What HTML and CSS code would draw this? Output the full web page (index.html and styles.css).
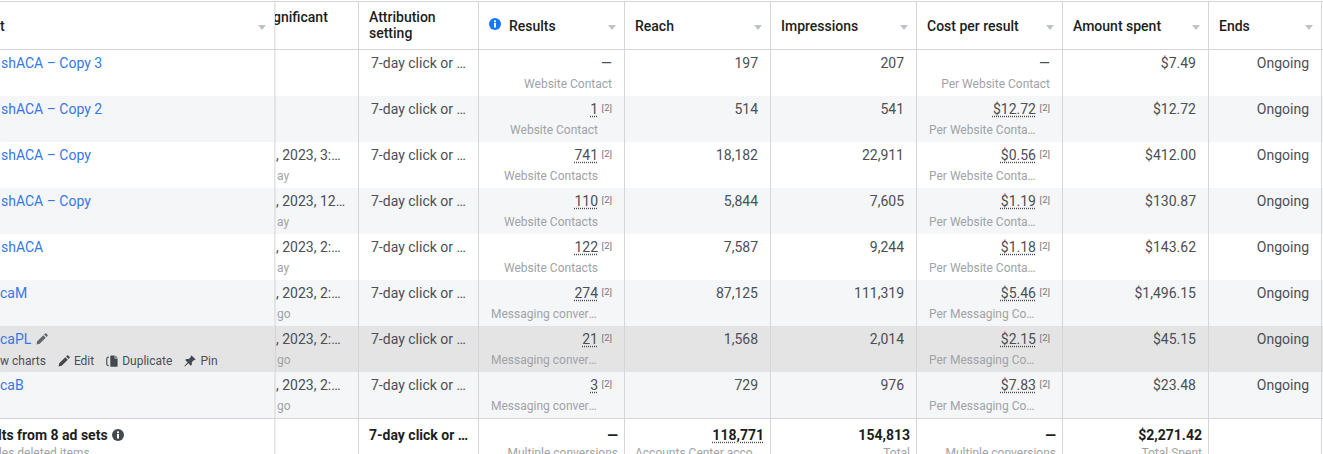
FILE: index.html
```html
<!DOCTYPE html>
<html>
<head>
    <title>Ad sets</title>
    <link rel="stylesheet" href="styles.css">
</head>
<body>
    <div class="table">
        <div class="row head">
            <div class="cell name"><span class="cut-t">t</span><i class="sort"></i></div>
            <div class="cell"><span class="cut-sig">gnificant</span></div>
            <div class="cell pad">Attribution<br>setting</div>
            <div class="cell pad mid">
                <svg class="info" viewBox="0 0 12 12"><circle cx="6" cy="6" r="6" fill="#1877f2"/><rect x="5" y="5" width="2" height="4.5" fill="#fff"/><rect x="5" y="2.4" width="2" height="1.8" fill="#fff"/></svg>
                Results<i class="sort"></i>
            </div>
            <div class="cell pad mid">Reach<i class="sort"></i></div>
            <div class="cell pad mid">Impressions<i class="sort"></i></div>
            <div class="cell pad mid">Cost per result<i class="sort"></i></div>
            <div class="cell pad mid">Amount spent<i class="sort"></i></div>
            <div class="cell pad mid">Ends<i class="sort"></i></div>
        </div>

        <div class="row">
            <div class="cell name"><a class="link">shACA – Copy 3</a></div>
            <div class="cell"></div>
            <div class="cell attr"><div class="cut">7-day click or 1-day view</div></div>
            <div class="cell val"><div>—</div><div class="sub">Website Contact</div></div>
            <div class="cell val">197</div>
            <div class="cell val">207</div>
            <div class="cell val"><div>—</div><div class="sub">Per Website Contact</div></div>
            <div class="cell val">$7.49</div>
            <div class="cell val">Ongoing</div>
        </div>

        <div class="row alt">
            <div class="cell name"><a class="link">shACA – Copy 2</a></div>
            <div class="cell"></div>
            <div class="cell attr"><div class="cut">7-day click or 1-day view</div></div>
            <div class="cell val"><div><span class="num">1</span><span class="ref">[2]</span></div><div class="sub noted">Website Contact</div></div>
            <div class="cell val">514</div>
            <div class="cell val">541</div>
            <div class="cell val"><div><span class="num">$12.72</span><span class="ref">[2]</span></div><div class="sub noted">Per Website Contact</div></div>
            <div class="cell val">$12.72</div>
            <div class="cell val">Ongoing</div>
        </div>

        <div class="row">
            <div class="cell name"><a class="link">shACA – Copy</a></div>
            <div class="cell date"><div>, 2023, 3:…</div><div class="sub ago">ay</div></div>
            <div class="cell attr"><div class="cut">7-day click or 1-day view</div></div>
            <div class="cell val"><div><span class="num">741</span><span class="ref">[2]</span></div><div class="sub noted">Website Contacts</div></div>
            <div class="cell val">18,182</div>
            <div class="cell val">22,911</div>
            <div class="cell val"><div><span class="num">$0.56</span><span class="ref">[2]</span></div><div class="sub noted">Per Website Contact</div></div>
            <div class="cell val">$412.00</div>
            <div class="cell val">Ongoing</div>
        </div>

        <div class="row alt">
            <div class="cell name"><a class="link">shACA – Copy</a></div>
            <div class="cell date"><div>, 2023, 12…</div><div class="sub ago">ay</div></div>
            <div class="cell attr"><div class="cut">7-day click or 1-day view</div></div>
            <div class="cell val"><div><span class="num">110</span><span class="ref">[2]</span></div><div class="sub noted">Website Contacts</div></div>
            <div class="cell val">5,844</div>
            <div class="cell val">7,605</div>
            <div class="cell val"><div><span class="num">$1.19</span><span class="ref">[2]</span></div><div class="sub noted">Per Website Contact</div></div>
            <div class="cell val">$130.87</div>
            <div class="cell val">Ongoing</div>
        </div>

        <div class="row">
            <div class="cell name"><a class="link">shACA</a></div>
            <div class="cell date"><div>, 2023, 2:…</div><div class="sub ago">ay</div></div>
            <div class="cell attr"><div class="cut">7-day click or 1-day view</div></div>
            <div class="cell val"><div><span class="num">122</span><span class="ref">[2]</span></div><div class="sub noted">Website Contacts</div></div>
            <div class="cell val">7,587</div>
            <div class="cell val">9,244</div>
            <div class="cell val"><div><span class="num">$1.18</span><span class="ref">[2]</span></div><div class="sub noted">Per Website Contact</div></div>
            <div class="cell val">$143.62</div>
            <div class="cell val">Ongoing</div>
        </div>

        <div class="row alt">
            <div class="cell name"><a class="link flush">caM</a></div>
            <div class="cell date"><div>, 2023, 2:…</div><div class="sub ago">go</div></div>
            <div class="cell attr"><div class="cut">7-day click or 1-day view</div></div>
            <div class="cell val"><div><span class="num">274</span><span class="ref">[2]</span></div><div class="sub noted">Messaging conversations</div></div>
            <div class="cell val">87,125</div>
            <div class="cell val">111,319</div>
            <div class="cell val"><div><span class="num">$5.46</span><span class="ref">[2]</span></div><div class="sub noted">Per Messaging Conversation</div></div>
            <div class="cell val">$1,496.15</div>
            <div class="cell val">Ongoing</div>
        </div>

        <div class="row hover">
            <div class="cell name">
                <div class="title">
                    <a class="link flush">caPL</a>
                    <svg class="ico" viewBox="0 0 12 12"><path d="M0.5 11.5l0.7-3.2 6.1-6.1 2.5 2.5-6.1 6.1zM8.1 1.4l0.9-0.9a0.9 0.9 0 0 1 1.2 0l1.3 1.3a0.9 0.9 0 0 1 0 1.2l-0.9 0.9z" fill="#606770"/></svg>
                </div>
                <div class="actions">
                    <span class="charts">w charts</span>
                    <span class="act"><svg class="ico" viewBox="0 0 12 12"><path d="M0.5 11.5l0.7-3.2 6.1-6.1 2.5 2.5-6.1 6.1zM8.1 1.4l0.9-0.9a0.9 0.9 0 0 1 1.2 0l1.3 1.3a0.9 0.9 0 0 1 0 1.2l-0.9 0.9z" fill="#444950"/></svg>Edit</span>
                    <span class="act"><svg class="ico" viewBox="0 0 12 12"><path d="M5 0.5h3.6v3h3v7.6a0.7 0.7 0 0 1-0.7 0.7H5a0.7 0.7 0 0 1-0.7-0.7V1.2A0.7 0.7 0 0 1 5 0.5zM9.4 0.6l2.1 2.2H9.4zM2.9 1.6v0.9C1.9 2.7 1.3 3.2 1.3 4v4.8c0 0.9 0.6 1.4 1.6 1.6v0.9C1.1 11.1 0.2 10.2 0.2 8.8V4c0-1.4 0.9-2.2 2.7-2.4z" fill="#444950"/></svg>Duplicate</span>
                    <span class="act"><svg class="ico" viewBox="0 0 12 12"><path d="M7.6 0.4l4 4-0.9 0.9-0.7-0.3-2.2 2.2 0.1 2.4-1.1 1.1-2.4-2.4-3.5 3.3-0.6-0.6 3.3-3.5-2.4-2.4 1.1-1.1 2.4 0.1 2.2-2.2-0.3-0.7z" fill="#444950"/></svg>Pin</span>
                </div>
            </div>
            <div class="cell date"><div>, 2023, 2:…</div><div class="sub ago">go</div></div>
            <div class="cell attr"><div class="cut">7-day click or 1-day view</div></div>
            <div class="cell val"><div><span class="num">21</span><span class="ref">[2]</span></div><div class="sub noted">Messaging conversations</div></div>
            <div class="cell val">1,568</div>
            <div class="cell val">2,014</div>
            <div class="cell val"><div><span class="num">$2.15</span><span class="ref">[2]</span></div><div class="sub noted">Per Messaging Conversation</div></div>
            <div class="cell val">$45.15</div>
            <div class="cell val">Ongoing</div>
        </div>

        <div class="row alt last">
            <div class="cell name"><a class="link flush">caB</a></div>
            <div class="cell date"><div>, 2023, 2:…</div><div class="sub ago">go</div></div>
            <div class="cell attr"><div class="cut">7-day click or 1-day view</div></div>
            <div class="cell val"><div><span class="num">3</span><span class="ref">[2]</span></div><div class="sub noted">Messaging conversations</div></div>
            <div class="cell val">729</div>
            <div class="cell val">976</div>
            <div class="cell val"><div><span class="num">$7.83</span><span class="ref">[2]</span></div><div class="sub noted">Per Messaging Conversation</div></div>
            <div class="cell val">$23.48</div>
            <div class="cell val">Ongoing</div>
        </div>

        <div class="row total">
            <div class="cell name">
                <div class="title pulled"><span>lts from 8 ad sets</span>
                    <svg class="ico" viewBox="0 0 12 12"><circle cx="6" cy="6" r="6" fill="#444950"/><rect x="5" y="5" width="2" height="4.5" fill="#fff"/><rect x="5" y="2.4" width="2" height="1.8" fill="#fff"/></svg>
                </div>
                <div class="sub includes">des deleted items</div>
            </div>
            <div class="cell"></div>
            <div class="cell attr"><div class="cut">7-day click or 1-day view</div></div>
            <div class="cell val"><div>—</div><div class="sub">Multiple conversions</div></div>
            <div class="cell val"><div><span class="num">118,771</span></div><div class="sub">Accounts Center accounts</div></div>
            <div class="cell val"><div>154,813</div><div class="sub">Total</div></div>
            <div class="cell val"><div>—</div><div class="sub">Multiple conversions</div></div>
            <div class="cell val"><div>$2,271.42</div><div class="sub">Total Spent</div></div>
            <div class="cell val"></div>
        </div>
    </div>
</body>
</html>
```

FILE: styles.css
```css
* { box-sizing: border-box; }
html, body { margin: 0; height: 454px; overflow: hidden; background: #fff; }
body { font-family: Roboto, "Liberation Sans", sans-serif; font-size: 14px; line-height: 18px; color: #4b4f56; }

.table { padding-top: 1px; height: 454px; overflow: hidden; }
.row {
    display: grid;
    grid-template-columns: 274px 85px 120px repeat(5, 146px) 113px;
    height: 46px;
}
.alt { background-color: #f5f6f7; }
.hover { background-color: #e4e4e4; }
.last { height: 47px; border-bottom: 1px solid #d5d6d9; }

.cell { border-right: 1px solid #d5d6d9; padding-top: 4px; white-space: nowrap; min-width: 0; overflow: hidden; }

.name {
    position: relative;
    z-index: 2;
    overflow: visible;
    border-right: none;
    background-color: #fff;
    box-shadow: 1px 0 0 #e2e3e5, 2px 0 1px rgba(0, 0, 0, 0.06);
}
.alt .name { background-color: #f5f6f7; }
.hover .name { background-color: #e4e4e4; }
.link { color: #3578e5; margin-left: 1px; }
.flush { margin-left: 0; }

.sub { font-size: 12px; color: #a0a3a8; margin-top: 3px; overflow: hidden; text-overflow: ellipsis; }
.val { padding-left: 12px; padding-right: 12px; text-align: right; }
.noted { padding-right: 14px; }
.attr { padding-left: 12px; padding-right: 12px; }
.cut { overflow: hidden; text-overflow: ellipsis; }
.date { padding-left: 2px; }
.ago { margin-left: 1px; }
.num { text-decoration: underline dotted #444950; text-underline-offset: 2px; }
.ref { display: inline-block; font-size: 9.5px; line-height: 10px; margin-left: 3px; width: 11px; vertical-align: 3px; color: #777; }

.head {
    height: 49px;
    border-top: 1px solid #d5d6d9;
    border-bottom: 1px solid #d5d6d9;
    color: #1c1e21;
    font-weight: 500;
    line-height: 16px;
}
.head .cell { position: relative; padding-top: 7px; }
.head .pad { padding-left: 10px; }
.head .mid { display: flex; align-items: center; padding-top: 0; }
.cut-t { display: block; padding-top: 9px; }
.head .cell > .cut-sig { margin-left: -1px; }
.info { width: 12px; height: 12px; margin: -4px 8px 0 0; }
.sort {
    position: absolute;
    right: 8px;
    top: 23px;
    border-left: 4.5px solid transparent;
    border-right: 4.5px solid transparent;
    border-top: 5px solid #bec2c9;
}

.title { display: flex; align-items: center; gap: 5px; }
.pulled { margin-left: -2px; gap: 4px; }
.ico { width: 12px; height: 12px; flex: none; }
.actions { display: flex; align-items: center; gap: 12px; margin-top: 4px; font-size: 12px; color: #4b4f56; }
.act { display: flex; align-items: center; gap: 4px; }

.total { height: auto; background-color: #fff; font-weight: 700; color: #1c1e21; }
.total .cell { padding-top: 7px; height: 60px; }
.total .sub { font-weight: 400; margin-top: 0; }
.total .val { padding-left: 10px; padding-right: 6px; }
.total .attr { padding-left: 10px; padding-right: 6px; }
.total .name .includes { margin-left: -5px; overflow: visible; }
```
